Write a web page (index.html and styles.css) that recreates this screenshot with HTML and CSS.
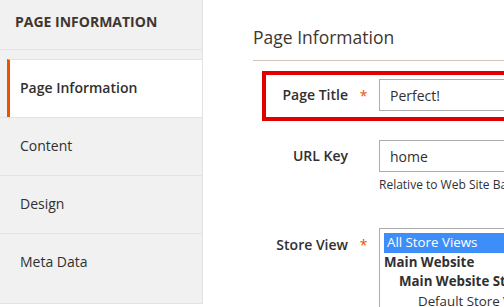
FILE: index.html
```html
<!DOCTYPE html>
<html lang="en">
<head>
    <meta charset="UTF-8">
    <meta name="viewport" content="width=device-width, initial-scale=1.0">
    <title>Page Information</title>
    <link rel="stylesheet" href="styles.css">
</head>
<body>
    <div class="page">
        <div class="sidebar">
            <div class="sidebar-title">Page Information</div>
            <ul class="tabs">
                <li class="tab active">Page Information</li>
                <li class="tab">Content</li>
                <li class="tab">Design</li>
                <li class="tab">Meta Data</li>
            </ul>
        </div>

        <div class="main">
            <h2 class="legend">Page Information</h2>

            <div class="field highlight">
                <label class="label" for="title">Page Title</label>
                <span class="req">*</span>
                <div class="control">
                    <input type="text" id="title" class="input" value="Perfect!">
                </div>
            </div>

            <div class="field url">
                <label class="label" for="url-key">URL Key</label>
                <span class="req"></span>
                <div class="control">
                    <input type="text" id="url-key" class="input" value="home">
                    <div class="note">Relative to Web Site Base URL</div>
                </div>
            </div>

            <div class="field store-field">
                <label class="label">Store View</label>
                <span class="req">*</span>
                <div class="control">
                    <div class="listbox">
                        <div class="option selected">All Store Views</div>
                        <div class="option group">Main Website</div>
                        <div class="option group sub">Main Website Store</div>
                        <div class="option store">Default Store View</div>
                    </div>
                </div>
            </div>
        </div>
    </div>
</body>
</html>
```

FILE: styles.css
```css
body {
    font-family: "Open Sans", Arial, sans-serif;
    color: #303030;
    margin: 0;
    overflow: hidden;
}
.page {
    display: flex;
    align-items: flex-start;
}
.sidebar {
    width: 202px;
    flex-shrink: 0;
    background-color: #f1f1f1;
    border-right: 1px solid #e3e3e3;
    border-bottom: 1px solid #e3e3e3;
}
.sidebar-title {
    padding: 12px 15px 17px;
    font-size: 14px;
    line-height: 20px;
    font-weight: 700;
    text-transform: uppercase;
    color: #41362f;
    border-bottom: 1px solid #e3e3e3;
    margin-bottom: 9px;
}
.tabs {
    list-style: none;
    margin: 0;
    padding: 0 0 12px;
}
.tab {
    height: 57px;
    line-height: 55px;
    padding-left: 20px;
    font-size: 14px;
    border-top: 1px solid #e3e3e3;
}
.tab.active {
    background-color: #fff;
    margin-left: 7px;
    padding-left: 10px;
    border-left: 3px solid #eb5202;
    font-weight: 600;
}
.main {
    flex: 1;
    padding-left: 50px;
    min-width: 0;
}
.legend {
    margin: 26px 0 0;
    padding-bottom: 11px;
    font-size: 17.5px;
    line-height: 23px;
    font-weight: 400;
    color: #41362f;
    border-bottom: 1px solid #ccc5bd;
}
.field {
    display: flex;
    align-items: flex-start;
    margin-left: 9px;
    margin-top: 14px;
    padding: 4px 0;
    border: 4px solid transparent;
    border-right: none;
    width: 600px;
}
.field.highlight {
    margin-top: 10px;
    border-color: #e00000;
}
.field.url {
    margin-top: 11px;
}
.field.store-field {
    margin-top: 16px;
}
.store-field .label {
    padding-top: 1px;
}
.label {
    width: 82px;
    text-align: right;
    font-size: 14px;
    font-weight: 600;
    line-height: 32px;
}
.req {
    width: 31px;
    text-align: center;
    color: #eb5202;
    font-size: 14px;
    line-height: 34px;
}
.control {
    flex: 1;
}
.input {
    display: block;
    width: 100%;
    box-sizing: border-box;
    height: 32px;
    padding: 0 10px;
    border: 1px solid #adadad;
    font-family: "Open Sans", Arial, sans-serif;
    font-size: 14px;
    color: #303030;
    margin: 0;
}
.note {
    font-size: 12px;
    line-height: 18px;
    margin-top: 4px;
    margin-bottom: 2px;
}
.listbox {
    border: 1px solid #adadad;
    padding: 4px;
    height: 100px;
}
.option {
    font-size: 13.3px;
    line-height: 19.5px;
    padding-left: 3px;
    white-space: nowrap;
}
.option.selected {
    background-color: #3d8ef8;
    color: #fff;
}
.option.group {
    font-weight: 700;
    padding-left: 0;
}
.option.sub {
    padding-left: 15px;
}
.option.store {
    padding-left: 34px;
}
```
